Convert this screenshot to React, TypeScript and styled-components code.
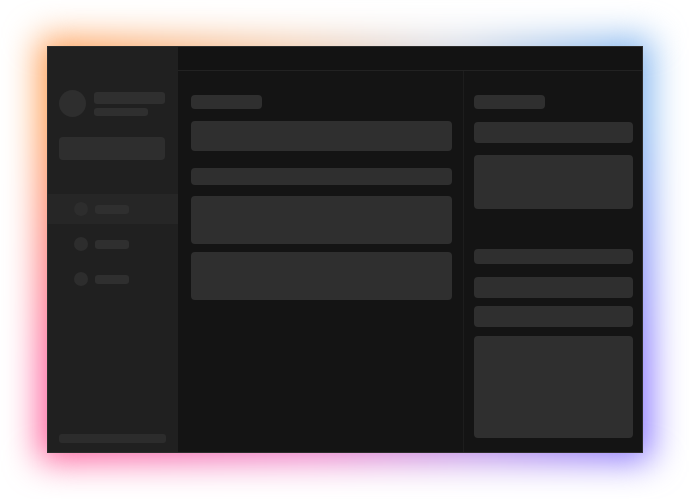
import React from "react";
import styled, { createGlobalStyle } from "styled-components";

const GlobalStyle = createGlobalStyle`
    html, body {
        margin: 0;
        padding: 0;
        background: #ffffff;
        font-family: Inter, "Liberation Sans", sans-serif;
    }
`;

const Stage = styled.div`
    width: 690px;
    height: 499px;
    display: flex;
    align-items: center;
    justify-content: center;
    overflow: hidden;
`;

const Frame = styled.div`
    position: relative;
    width: 596px;
    height: 407px;
`;

// blurred colour layer sitting behind the window
const GlowLayer = styled.div`
    position: absolute;
    inset: -8px;
    filter: blur(17px);
    z-index: 0;
`;

const GlowTint = styled.div<{ $top?: boolean }>`
    position: absolute;
    inset: 0;
    background: ${p =>
        p.$top
            ? "linear-gradient(to right, #ff9a4e, #f2c8a8 40%, #d4d8e2 68%, #78b0f0)"
            : "linear-gradient(to right, #ff5e98, #ec78c4 45%, #b88ae8 72%, #8474ff)"};
    ${p =>
        p.$top &&
        `
        -webkit-mask-image: linear-gradient(to bottom, #000 0%, #000 20%, transparent 78%);
        mask-image: linear-gradient(to bottom, #000 0%, #000 20%, transparent 78%);
    `}
`;

const Window = styled.div`
    position: relative;
    z-index: 1;
    box-sizing: border-box;
    width: 100%;
    height: 100%;
    display: flex;
    background: #141414;
    border: 1px solid #2c2c2c;
    overflow: hidden;
`;

const Sidebar = styled.aside`
    width: 130px;
    flex-shrink: 0;
    background: #202020;
    display: flex;
    flex-direction: column;
    padding-top: 43px;
`;

const Profile = styled.div`
    display: flex;
    align-items: center;
    gap: 8px;
    padding-left: 11px;
`;

const Avatar = styled.div`
    width: 27px;
    height: 27px;
    border-radius: 50%;
    background: #2e2e2e;
`;

const Lines = styled.div`
    display: flex;
    flex-direction: column;
    gap: 4px;
`;

const Skeleton = styled.div<{ $w?: number; $h: number; $mt?: number; $r?: number }>`
    width: ${p => (p.$w ? `${p.$w}px` : "100%")};
    height: ${p => p.$h}px;
    margin-top: ${p => p.$mt ?? 0}px;
    border-radius: ${p => p.$r ?? 4}px;
    background: #2f2f2f;
    flex-shrink: 0;
`;

const SideButton = styled(Skeleton)`
    margin-left: 11px;
    background: #2e2e2e;
`;

const Nav = styled.nav`
    display: flex;
    flex-direction: column;
    gap: 5px;
    margin-top: 34px;
`;

const NavItem = styled.div<{ $active?: boolean }>`
    height: 30px;
    display: flex;
    align-items: center;
    gap: 7px;
    padding-left: 26px;
    background: ${p => (p.$active ? "#262626" : "transparent")};
`;

const NavDot = styled.div`
    width: 14px;
    height: 14px;
    border-radius: 50%;
    background: #2d2d2d;
`;

const SideFooter = styled(Skeleton)`
    margin: auto 0 9px 11px;
    background: #2c2c2c;
`;

const Main = styled.div`
    flex: 1;
    display: flex;
    flex-direction: column;
    min-width: 0;
`;

const TopBar = styled.header`
    height: 23px;
    flex-shrink: 0;
    background: #131313;
    border-bottom: 1px solid #222222;
`;

const Body = styled.div`
    flex: 1;
    display: flex;
    min-height: 0;
`;

const Content = styled.section`
    width: 261px;
    padding: 24px 11px 0 13px;
    display: flex;
    flex-direction: column;
    border-right: 1px solid #1d1d1d;
`;

const Panel = styled.section`
    flex: 1;
    padding: 24px 9px 0 10px;
    display: flex;
    flex-direction: column;
`;

export default function App() {
    return (
        <>
            <GlobalStyle />
            <Stage>
                <Frame>
                    <GlowLayer>
                        <GlowTint />
                        <GlowTint $top />
                    </GlowLayer>
                    <Window>
                        <Sidebar>
                            <Profile>
                                <Avatar />
                                <Lines>
                                    <Skeleton $w={71} $h={12} $r={3} />
                                    <Skeleton $w={54} $h={8} $r={3} />
                                </Lines>
                            </Profile>
                            <SideButton $w={106} $h={23} $mt={20} />
                            <Nav>
                                <NavItem $active>
                                    <NavDot />
                                    <Skeleton $w={34} $h={9} $r={3} />
                                </NavItem>
                                <NavItem>
                                    <NavDot />
                                    <Skeleton $w={34} $h={9} $r={3} />
                                </NavItem>
                                <NavItem>
                                    <NavDot />
                                    <Skeleton $w={34} $h={9} $r={3} />
                                </NavItem>
                            </Nav>
                            <SideFooter $w={107} $h={9} $r={3} />
                        </Sidebar>
                        <Main>
                            <TopBar />
                            <Body>
                                <Content>
                                    <Skeleton $w={71} $h={14} />
                                    <Skeleton $h={30} $mt={12} />
                                    <Skeleton $h={17} $mt={17} />
                                    <Skeleton $h={48} $mt={11} />
                                    <Skeleton $h={48} $mt={8} />
                                </Content>
                                <Panel>
                                    <Skeleton $w={71} $h={14} />
                                    <Skeleton $h={21} $mt={13} />
                                    <Skeleton $h={54} $mt={12} />
                                    <Skeleton $h={15} $mt={40} />
                                    <Skeleton $h={21} $mt={13} />
                                    <Skeleton $h={21} $mt={8} />
                                    <Skeleton $h={102} $mt={9} />
                                </Panel>
                            </Body>
                        </Main>
                    </Window>
                </Frame>
            </Stage>
        </>
    );
}
